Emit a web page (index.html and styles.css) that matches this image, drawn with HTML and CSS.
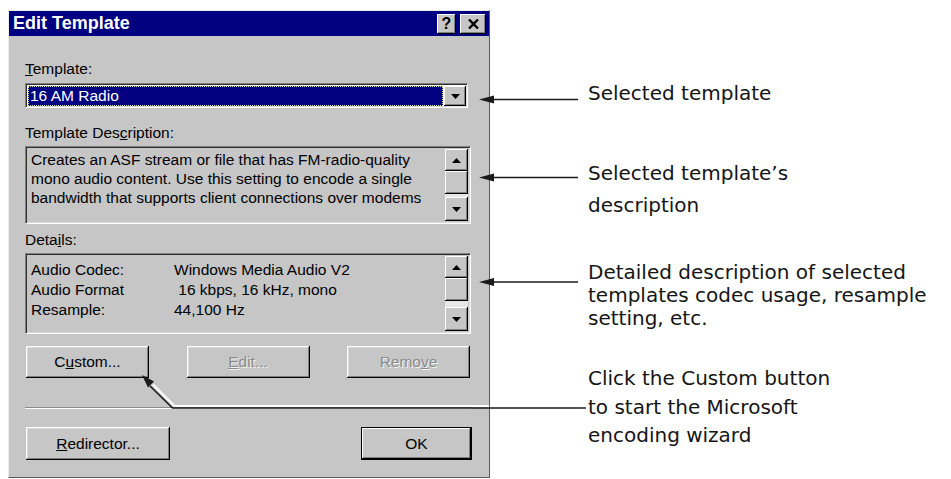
FILE: index.html
```html
<!DOCTYPE html>
<html lang="en">
<head>
  <meta charset="UTF-8">
  <meta name="viewport" content="width=device-width, initial-scale=1.0">
  <title>Edit Template</title>
  <link rel="stylesheet" href="styles.css">
</head>
<body>
  <div class="page">
    <div class="dialog">
      <div class="titlebar">
        <span class="title">Edit Template</span>
        <div class="title-btns">
          <span class="tbtn">?</span>
          <span class="tbtn close">
            <svg width="11" height="10" viewBox="0 0 11 10"><path d="M1 0.5 L10 9.5 M10 0.5 L1 9.5" stroke="#000" stroke-width="2.4"/></svg>
          </span>
        </div>
      </div>

      <div class="dlg-body">
        <div class="label"><u>T</u>emplate:</div>
        <div class="combo">
          <div class="combo-value"><span>16 AM Radio</span></div>
          <div class="combo-btn">
            <svg width="9" height="5" viewBox="0 0 9 5"><polygon points="0,0 9,0 4.5,5" fill="#000"/></svg>
          </div>
        </div>

        <div class="label gap-desc">Template Des<u>c</u>ription:</div>
        <div class="listbox desc">
          <div class="listbox-text">
            Creates an ASF stream or file that has FM-radio-quality<br>
            mono audio content. Use this setting to encode a single<br>
            bandwidth that supports client connections over modems
          </div>
          <div class="scrollbar">
            <div class="sb-btn"><svg width="9" height="5" viewBox="0 0 9 5"><polygon points="0,5 9,5 4.5,0" fill="#000"/></svg></div>
            <div class="sb-thumb"></div>
            <div class="sb-track"></div>
            <div class="sb-btn down"><svg width="9" height="5" viewBox="0 0 9 5"><polygon points="0,0 9,0 4.5,5" fill="#000"/></svg></div>
          </div>
        </div>

        <div class="label gap-details">Deta<u>i</u>ls:</div>
        <div class="listbox details">
          <div class="listbox-text detail-grid">
            <span>Audio Codec:</span><span>Windows Media Audio V2</span>
            <span>Audio Format</span><span>&nbsp;16 kbps, 16 kHz, mono</span>
            <span>Resample:</span><span>44,100 Hz</span>
          </div>
          <div class="scrollbar">
            <div class="sb-btn"><svg width="9" height="5" viewBox="0 0 9 5"><polygon points="0,5 9,5 4.5,0" fill="#000"/></svg></div>
            <div class="sb-thumb"></div>
            <div class="sb-track"></div>
            <div class="sb-btn down"><svg width="9" height="5" viewBox="0 0 9 5"><polygon points="0,0 9,0 4.5,5" fill="#000"/></svg></div>
          </div>
        </div>

        <div class="btn-row">
          <button class="btn">C<u>u</u>stom...</button>
          <button class="btn disabled"><u>E</u>dit...</button>
          <button class="btn disabled">Remo<u>v</u>e</button>
        </div>

        <div class="separator"></div>

        <div class="btn-row bottom">
          <button class="btn wide"><u>R</u>edirector...</button>
          <button class="btn default">OK</button>
        </div>
      </div>
    </div>

    <div class="callouts">
      <div class="callout c1">Selected template</div>
      <div class="callout c2">Selected template’s<br>description</div>
      <div class="callout c3">
        <div class="l1">Detailed description of selected</div>
        <div class="l2">templates codec usage, resample</div>
        <div class="l3">setting, etc.</div>
      </div>
      <div class="callout c4">Click the Custom button<br>to start the Microsoft<br>encoding wizard</div>
    </div>

    <!-- leader lines drawn over the dialog -->
    <svg class="leaders" width="951" height="479" viewBox="0 0 951 479">
      <g fill="#1a1a1a" stroke="#1a1a1a">
        <line x1="490" y1="99.5" x2="578" y2="99.5" stroke-width="1.6"/>
        <polygon points="479,99.5 494,95.5 494,103.5" stroke="none"/>
        <line x1="490" y1="177.5" x2="578" y2="177.5" stroke-width="1.6"/>
        <polygon points="479,177.5 494,173.5 494,181.5" stroke="none"/>
        <line x1="490" y1="282" x2="578" y2="282" stroke-width="1.6"/>
        <polygon points="479,282 494,278 494,286" stroke="none"/>
      </g>
      <polyline points="153,384.5 174.5,406 489,406" fill="none" stroke="#fff" stroke-width="2.2"/>
      <polyline points="150,386 172.5,408 586,408" fill="none" stroke="#1a1a1a" stroke-width="1.6"/>
      <polygon points="142,375 154,381.5 148,387.5" fill="#1a1a1a"/>
    </svg>
  </div>
</body>
</html>
```

FILE: styles.css
```css
body {
  margin: 0;
  background-color: #fff;
  font-family: "Liberation Sans", Arial, sans-serif;
}
.page {
  position: relative;
  width: 951px;
  height: 479px;
  display: flex;
  overflow: hidden;
}

/* dialog window */
.dialog {
  margin: 10px 0 0 8px;
  width: 480px;
  height: 466px;
  background-color: #c6c6c6;
  border-top: 1px solid #ececec;
  border-left: 1px solid #ececec;
  border-right: 1px solid #5a5a5a;
  border-bottom: 1px solid #5a5a5a;
  display: flex;
  flex-direction: column;
}
.titlebar {
  height: 25px;
  background-color: #000080;
  display: flex;
  align-items: center;
  justify-content: space-between;
  padding: 0 3px 0 4px;
}
.title {
  color: #fff;
  font-weight: bold;
  font-size: 18px;
}
.title-btns {
  display: flex;
  gap: 4px;
}
.tbtn {
  width: 19px;
  height: 20px;
  background-color: #c6c6c6;
  box-shadow: inset -1px -1px #000, inset 1px 1px #fff, inset -2px -2px #808080;
  display: flex;
  align-items: center;
  justify-content: center;
  font-weight: bold;
  font-size: 16px;
  color: #000;
}
.tbtn.close {
  width: 26px;
}

.dlg-body {
  padding: 24px 18px 0 16px;
  display: flex;
  flex-direction: column;
}
.label {
  font-size: 15.5px;
  line-height: 18px;
  height: 18px;
  color: #000;
}
.gap-desc {
  margin-top: 16px;
}
.gap-details {
  margin-top: 7px;
}

/* combo box */
.combo {
  margin-top: 5px;
  width: 443px;
  height: 25px;
  box-sizing: border-box;
  background-color: #fff;
  border-top: 1px solid #808080;
  border-left: 1px solid #808080;
  border-right: 1px solid #fff;
  border-bottom: 1px solid #fff;
  box-shadow: inset 1px 1px #303030, inset -1px -1px #dcdcdc;
  padding: 2px 1px 1px 2px;
  display: flex;
}
.combo-value {
  flex: 1;
  margin-right: 1px;
  background-color: #000080;
  outline: 1px dotted #d8d8a0;
  outline-offset: -1px;
  color: #fff;
  font-size: 15.5px;
  line-height: 20px;
  padding-left: 2px;
}
.combo-btn {
  width: 22px;
  background-color: #c6c6c6;
  box-shadow: inset -1px -1px #000, inset 1px 1px #fff, inset -2px -2px #808080;
  display: flex;
  align-items: center;
  justify-content: center;
}

/* read-only list boxes */
.listbox {
  margin-top: 4px;
  width: 446px;
  box-sizing: border-box;
  border-top: 1px solid #808080;
  border-left: 1px solid #808080;
  border-right: 1px solid #fff;
  border-bottom: 1px solid #fff;
  box-shadow: inset 1px 1px #303030, inset -1px -1px #dcdcdc;
  padding: 2px 2px 2px 2px;
  display: flex;
}
.listbox.desc {
  height: 78px;
}
.listbox.details {
  height: 81px;
}
.listbox-text {
  flex: 1;
  font-size: 15.5px;
  color: #000;
  white-space: nowrap;
  overflow: hidden;
  padding-left: 3px;
}
.desc .listbox-text {
  line-height: 19px;
  padding-top: 1px;
}
.detail-grid {
  display: grid;
  grid-template-columns: 143px auto;
  grid-auto-rows: 20px;
  line-height: 20px;
  padding-top: 4px;
  align-content: start;
}
.scrollbar {
  width: 23px;
  display: flex;
  flex-direction: column;
}
.sb-btn, .sb-thumb {
  background-color: #c6c6c6;
  box-shadow: inset -1px -1px #000, inset 1px 1px #fff, inset -2px -2px #808080;
}
.sb-btn {
  height: 22px;
  display: flex;
  align-items: center;
  justify-content: center;
}
.sb-btn.down {
  height: 24px;
}
.sb-thumb {
  height: 23px;
}
.sb-track {
  flex: 1;
  background-color: #e6e6e6;
}

/* buttons */
.btn-row {
  margin-top: 12px;
  padding: 0 1px 0 1px;
  display: flex;
  justify-content: space-between;
}
.btn-row.bottom {
  margin-top: 18px;
  padding-right: 0;
  margin-right: -1px;
}
.btn {
  width: 123px;
  height: 32px;
  padding: 0;
  border: none;
  background-color: #c6c6c6;
  box-shadow: inset -1px -1px #000, inset 1px 1px #fff, inset -2px -2px #808080, inset 2px 2px #dcdcdc;
  font-family: "Liberation Sans", Arial, sans-serif;
  font-size: 15.5px;
  color: #000;
}
.btn.disabled {
  color: #8a8a8a;
  text-shadow: 1px 1px #f4f4f4;
}
.bottom .btn {
  height: 33px;
}
.btn.wide {
  width: 144px;
}
.btn.default {
  width: 111px;
  box-shadow: inset 0 0 0 1px #000, inset -2px -2px #000, inset 2px 2px #fff, inset -3px -3px #808080;
}
.separator {
  margin-top: 29px;
  height: 0;
  border-top: 1px solid #8a8a8a;
  border-bottom: 1px solid #fff;
}

/* annotations */
.callouts {
  margin-left: 98px;
  font-family: "DejaVu Sans", Verdana, sans-serif;
  font-size: 20px;
  color: #151515;
  white-space: nowrap;
}
.c1 {
  margin-top: 81px;
  line-height: 24px;
}
.c2 {
  margin-top: 52px;
  line-height: 32px;
}
.c3 {
  margin-top: 39.5px;
  line-height: 23.4px;
}
.c4 {
  margin-top: 33.5px;
  line-height: 28.5px;
}
.leaders {
  position: absolute;
  top: 0;
  left: 0;
  pointer-events: none;
}
```
